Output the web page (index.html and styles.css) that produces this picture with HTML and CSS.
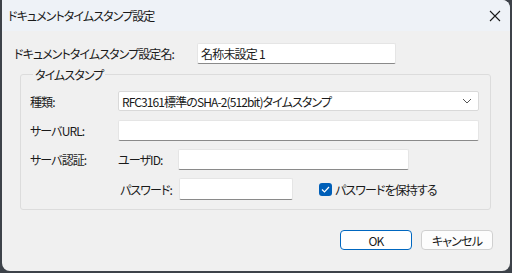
FILE: index.html
```html
<!DOCTYPE html>
<html lang="ja">
<head>
    <meta charset="UTF-8">
    <title>ドキュメントタイムスタンプ設定</title>
    <link rel="stylesheet" href="styles.css">
</head>
<body>
    <div class="window">
        <div class="titlebar">
            <span class="title">ドキュメントタイムスタンプ設定</span>
            <svg class="close" width="12" height="12" viewBox="0 0 12 12">
                <path d="M1 1 L11 11 M11 1 L1 11" stroke="#1a1a1a" stroke-width="1.1" fill="none"/>
            </svg>
        </div>
        <div class="content">
            <div class="name-row">
                <label class="name-label">ドキュメントタイムスタンプ設定名:</label>
                <input class="field name-input" type="text" value="名称未設定 1">
            </div>

            <fieldset class="group">
                <legend>タイムスタンプ</legend>
                <div class="row">
                    <span class="label">種類:</span>
                    <div class="select">
                        <span>RFC3161標準のSHA-2(512bit)タイムスタンプ</span>
                        <svg width="10" height="6" viewBox="0 0 10 6">
                            <path d="M1 1 L5 5 L9 1" stroke="#555" stroke-width="1" fill="none"/>
                        </svg>
                    </div>
                </div>
                <div class="row">
                    <span class="label">サーバURL:</span>
                    <input class="field url-input" type="text">
                </div>
                <div class="row">
                    <span class="label">サーバ認証:</span>
                    <span class="sublabel">ユーザID:</span>
                    <input class="field user-input" type="text">
                </div>
                <div class="row">
                    <span class="label"></span>
                    <span class="sublabel pw">パスワード:</span>
                    <input class="field pw-input" type="password">
                    <label class="check">
                        <span class="box">
                            <svg width="9" height="7" viewBox="0 0 9 7">
                                <path d="M1 3.5 L3.5 6 L8 1" stroke="#fff" stroke-width="1.2" fill="none"/>
                            </svg>
                        </span>
                        パスワードを保持する
                    </label>
                </div>
            </fieldset>

            <div class="buttons">
                <button class="btn primary">OK</button>
                <button class="btn">キャンセル</button>
            </div>
        </div>
    </div>
</body>
</html>
```

FILE: styles.css
```css
body {
    margin: 0;
    background-color: #3d4249;
    font-family: "Noto Sans CJK JP", "Noto Sans", sans-serif;
    font-size: 12px;
    font-feature-settings: "palt";
    letter-spacing: -0.9px;
    color: #1a1a1a;
}
.window {
    width: 508px;
    height: 271px;
    margin-left: 2px;
    background: #f0f0f0;
    border-radius: 0 8px 8px 8px;
    overflow: hidden;
}
.titlebar {
    height: 31px;
    background: #eef2f7;
    display: flex;
    align-items: center;
    justify-content: space-between;
    padding: 0 9px 0 6px;
}
.content {
    padding: 12px 17px 0 12px;
}
.name-row {
    display: flex;
    align-items: center;
    height: 21px;
}
.name-label {
    width: 183px;
}
.field {
    box-sizing: border-box;
    height: 21px;
    background: #fff;
    border: 1px solid #e5e5e5;
    border-bottom-color: #8a8a8a;
    border-radius: 2px;
    font-family: inherit;
    font-size: 12px;
    font-feature-settings: "palt";
    letter-spacing: -0.8px;
    padding: 0 3px;
    color: #1a1a1a;
    outline: none;
}
.name-input {
    width: 199px;
}
.group {
    margin: 2px 0 0 6px;
    padding: 8px 11px 9px 9px;
    border: 1px solid #dcdcdc;
    border-radius: 3px;
    width: 449px;
}
.group legend {
    padding: 0 2px;
    margin-left: 3px;
}
.row {
    display: flex;
    align-items: center;
    height: 20px;
    margin-bottom: 9px;
}
.row:last-child {
    margin-bottom: 0;
    height: 22px;
}
.label {
    width: 88px;
    flex: none;
}
.sublabel {
    width: 60px;
    flex: none;
}
.sublabel.pw {
    padding-left: 2px;
    width: 59px;
}
.select {
    box-sizing: border-box;
    width: 361px;
    height: 20px;
    background: #fff;
    border: 1px solid #d9d9d9;
    border-radius: 2px;
    display: flex;
    align-items: center;
    justify-content: space-between;
    padding: 0 6px 0 3px;
}
.url-input {
    width: 361px;
}
.user-input {
    width: 231px;
    height: 21px;
}
.pw-input {
    width: 114px;
    height: 22px;
}
.check {
    display: flex;
    align-items: center;
    gap: 3px;
    margin-left: 26px;
}
.box {
    width: 13px;
    height: 13px;
    border-radius: 3px;
    background: #005fb8;
    display: flex;
    align-items: center;
    justify-content: center;
}
.buttons {
    display: flex;
    justify-content: flex-end;
    gap: 9px;
    margin: 20px 0 0;
}
.btn {
    width: 72px;
    height: 20px;
    background: #fdfdfd;
    border: 1px solid #d0d0d0;
    border-radius: 4px;
    font-family: inherit;
    font-size: 12px;
    font-feature-settings: "palt";
    letter-spacing: -0.8px;
    color: #1a1a1a;
    padding: 0;
}
.btn.primary {
    border-color: #0067c0;
    background: #fff;
}
```
